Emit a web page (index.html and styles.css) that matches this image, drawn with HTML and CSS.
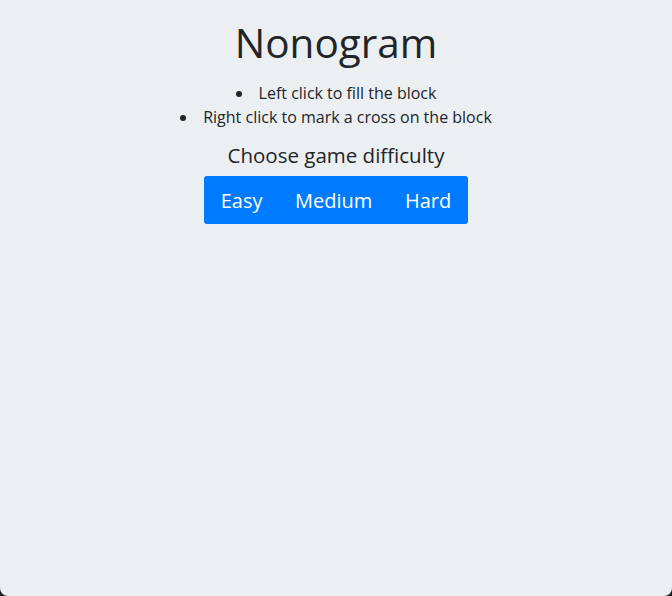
FILE: index.html
```html
<!DOCTYPE html>
<html lang="en">
<head>
<meta charset="utf-8">
<title>Nonogram</title>
<link rel="stylesheet" href="styles.css">
</head>
<body>
<div class="app">
  <h1 class="title">Nonogram</h1>
  <ul class="rules">
    <li>Left click to fill the block</li>
    <li>Right click to mark a cross on the block</li>
  </ul>
  <div class="choose">Choose game difficulty</div>
  <div class="btn-group">
    <button class="btn">Easy</button>
    <button class="btn">Medium</button>
    <button class="btn">Hard</button>
  </div>
</div>
</body>
</html>
```
FILE: styles.css
```css
html {
  background: #1f2326;
}
body {
  margin: 0;
  font-family: "Open Sans", "Noto Sans", sans-serif;
  color: #212529;
}
.app {
  height: 596px;
  box-sizing: border-box;
  background: #eceff1;
  border-radius: 0 0 8px 8px;
  display: flex;
  flex-direction: column;
  align-items: center;
  padding-top: 15px;
}
.title {
  margin: 0;
  font-size: 40.5px;
  font-weight: 400;
  line-height: 56px;
}
.rules {
  margin: 10px 0 0;
  padding: 0;
  list-style-position: inside;
  text-align: center;
  font-size: 16px;
  line-height: 24px;
}
.choose {
  margin-top: 11px;
  font-size: 20.5px;
  line-height: 30px;
}
.btn-group {
  margin-top: 6px;
  display: flex;
  background: #007bff;
  border-radius: 4px;
  overflow: hidden;
}
.btn {
  font-family: inherit;
  font-size: 20px;
  line-height: 30px;
  padding: 9px 15.3px 7px;
  border: 1px solid #007bff;
  background: #007bff;
  color: #fff;
}
```
